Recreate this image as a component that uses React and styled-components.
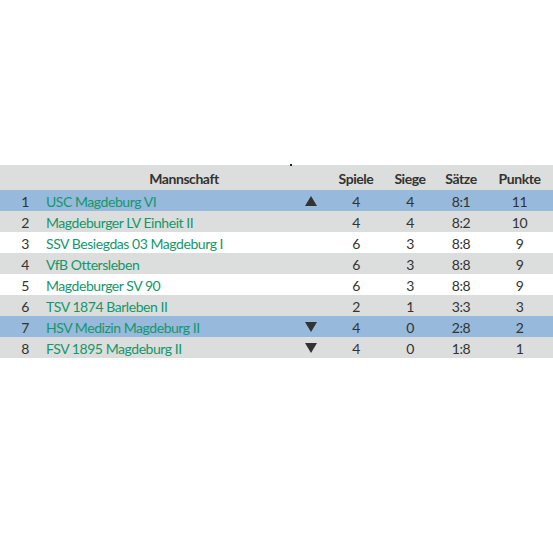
import React from "react";
import styled, { createGlobalStyle } from "styled-components";

const GlobalStyle = createGlobalStyle`
  body {
    margin: 0;
    background: #ffffff;
    font-family: "Lato", "Liberation Sans", sans-serif;
  }
`;

const teams = [
  { rank: 1, name: "USC Magdeburg VI", trend: "up", games: 4, wins: 4, sets: "8:1", points: 11, tone: "blue" },
  { rank: 2, name: "Magdeburger LV Einheit II", games: 4, wins: 4, sets: "8:2", points: 10, tone: "gray" },
  { rank: 3, name: "SSV Besiegdas 03 Magdeburg I", games: 6, wins: 3, sets: "8:8", points: 9, tone: "white" },
  { rank: 4, name: "VfB Ottersleben", games: 6, wins: 3, sets: "8:8", points: 9, tone: "gray" },
  { rank: 5, name: "Magdeburger SV 90", games: 6, wins: 3, sets: "8:8", points: 9, tone: "white" },
  { rank: 6, name: "TSV 1874 Barleben II", games: 2, wins: 1, sets: "3:3", points: 3, tone: "gray" },
  { rank: 7, name: "HSV Medizin Magdeburg II", trend: "down", games: 4, wins: 0, sets: "2:8", points: 2, tone: "blue" },
  { rank: 8, name: "FSV 1895 Magdeburg II", trend: "down", games: 4, wins: 0, sets: "1:8", points: 1, tone: "gray" },
];

const tones = {
  blue: "#97b9db",
  gray: "#dcdddd",
  white: "#ffffff",
};

const Page = styled.div`
  padding-top: 165px;
  width: 553px;
`;

const Table = styled.div`
  position: relative;
  display: grid;
  grid-template-columns: 40px 260px 28px 56px 52px 50px 67px;
  font-size: 14px;
  letter-spacing: -0.45px;
`;

const Row = styled.div`
  display: contents;
`;

const Head = styled.div`
  background: #dcdddd;
  height: 25px;
  padding-top: 2px;
  box-sizing: border-box;
  display: flex;
  align-items: center;
  justify-content: center;
  font-weight: 700;
  color: #333333;
  grid-column: ${(p) => p.$span || "auto"};
`;

const Cell = styled.div`
  background: ${(p) => tones[p.$tone]};
  height: 21px;
  padding-top: 1px;
  box-sizing: border-box;
  display: flex;
  align-items: center;
  justify-content: ${(p) => p.$align || "center"};
  color: #333333;
  padding-right: ${(p) => p.$right || "0"};
  padding-left: ${(p) => p.$left || "0"};
`;

const Name = styled(Cell)`
  color: #14976b;
  padding-left: 6px;
`;

const Dot = styled.span`
  position: absolute;
  left: 290px;
  top: -1px;
  width: 2px;
  height: 2px;
  background: #222;
`;

const Arrow = ({ dir }) => (
  <svg width="12" height="10" viewBox="0 0 12 10">
    {dir === "up" ? (
      <polygon points="6,0 12,10 0,10" fill="#333333" />
    ) : (
      <polygon points="0,0 12,0 6,10" fill="#333333" />
    )}
  </svg>
);

export default function App() {
  return (
    <Page>
      <GlobalStyle />
      <Table>
        <Dot />
        <Head />
        <Head $span="span 2">Mannschaft</Head>
        <Head>Spiele</Head>
        <Head>Siege</Head>
        <Head>Sätze</Head>
        <Head>Punkte</Head>
        {teams.map((t) => (
          <Row key={t.rank}>
            <Cell $tone={t.tone} $align="flex-end" $right="11px">
              {t.rank}
            </Cell>
            <Name $tone={t.tone} $align="flex-start">
              {t.name}
            </Name>
            <Cell $tone={t.tone} $align="flex-start" $left="5px">
              {t.trend && <Arrow dir={t.trend} />}
            </Cell>
            <Cell $tone={t.tone}>{t.games}</Cell>
            <Cell $tone={t.tone}>{t.wins}</Cell>
            <Cell $tone={t.tone}>{t.sets}</Cell>
            <Cell $tone={t.tone}>{t.points}</Cell>
          </Row>
        ))}
      </Table>
    </Page>
  );
}
